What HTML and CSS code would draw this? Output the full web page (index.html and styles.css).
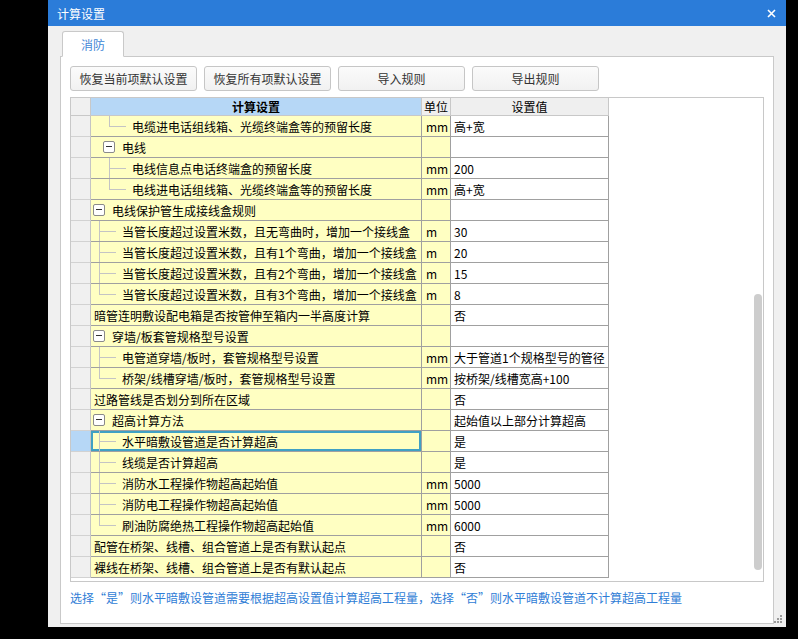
FILE: index.html
```html
<!DOCTYPE html>
<html lang="zh-CN">
<head>
<meta charset="utf-8">
<title>计算设置</title>
<link rel="stylesheet" href="styles.css">
</head>
<body>
<div class="dialog">
  <div class="titlebar">
    <span class="title">计算设置</span>
    <svg class="close" viewBox="0 0 9 9" width="9" height="9"><path d="M1 1L8 8M8 1L1 8" stroke="#fff" stroke-width="1.6" fill="none"/></svg>
  </div>
  <div class="dbody">
    <div class="tabs"><div class="tab">消防</div></div>
    <div class="panel">
      <div class="toolbar">
        <button class="btn">恢复当前项默认设置</button>
        <button class="btn">恢复所有项默认设置</button>
        <button class="btn">导入规则</button>
        <button class="btn">导出规则</button>
      </div>
      <div class="gridbox">
        <div class="table">
          <div class="row head">
            <div class="rh"></div>
            <div class="nm hsel">计算设置</div>
            <div class="un">单位</div>
            <div class="va">设置值</div>
          </div>
          <div class="row">
            <div class="rh"></div>
            <div class="nm"><span class="elb l2 last"></span><span>电缆进电话组线箱、光缆终端盒等的预留长度</span></div>
            <div class="un">mm</div>
            <div class="va">高+宽</div>
          </div>
          <div class="row">
            <div class="rh"></div>
            <div class="nm"><span class="ind"></span><span class="box"></span><span>电线</span></div>
            <div class="un"></div>
            <div class="va"></div>
          </div>
          <div class="row">
            <div class="rh"></div>
            <div class="nm"><span class="elb l2"></span><span>电线信息点电话终端盒的预留长度</span></div>
            <div class="un">mm</div>
            <div class="va">200</div>
          </div>
          <div class="row">
            <div class="rh"></div>
            <div class="nm"><span class="elb l2 last"></span><span>电线进电话组线箱、光缆终端盒等的预留长度</span></div>
            <div class="un">mm</div>
            <div class="va">高+宽</div>
          </div>
          <div class="row">
            <div class="rh"></div>
            <div class="nm"><span class="box"></span><span>电线保护管生成接线盒规则</span></div>
            <div class="un"></div>
            <div class="va"></div>
          </div>
          <div class="row">
            <div class="rh"></div>
            <div class="nm"><span class="elb"></span><span>当管长度超过设置米数，且无弯曲时，增加一个接线盒</span></div>
            <div class="un">m</div>
            <div class="va">30</div>
          </div>
          <div class="row">
            <div class="rh"></div>
            <div class="nm"><span class="elb"></span><span>当管长度超过设置米数，且有1个弯曲，增加一个接线盒</span></div>
            <div class="un">m</div>
            <div class="va">20</div>
          </div>
          <div class="row">
            <div class="rh"></div>
            <div class="nm"><span class="elb"></span><span>当管长度超过设置米数，且有2个弯曲，增加一个接线盒</span></div>
            <div class="un">m</div>
            <div class="va">15</div>
          </div>
          <div class="row">
            <div class="rh"></div>
            <div class="nm"><span class="elb last"></span><span>当管长度超过设置米数，且有3个弯曲，增加一个接线盒</span></div>
            <div class="un">m</div>
            <div class="va">8</div>
          </div>
          <div class="row">
            <div class="rh"></div>
            <div class="nm"><span class="t0">暗管连明敷设配电箱是否按管伸至箱内一半高度计算</span></div>
            <div class="un"></div>
            <div class="va">否</div>
          </div>
          <div class="row">
            <div class="rh"></div>
            <div class="nm"><span class="box"></span><span>穿墙/板套管规格型号设置</span></div>
            <div class="un"></div>
            <div class="va"></div>
          </div>
          <div class="row">
            <div class="rh"></div>
            <div class="nm"><span class="elb"></span><span>电管道穿墙/板时，套管规格型号设置</span></div>
            <div class="un">mm</div>
            <div class="va">大于管道1个规格型号的管径</div>
          </div>
          <div class="row">
            <div class="rh"></div>
            <div class="nm"><span class="elb last"></span><span>桥架/线槽穿墙/板时，套管规格型号设置</span></div>
            <div class="un">mm</div>
            <div class="va">按桥架/线槽宽高+100</div>
          </div>
          <div class="row">
            <div class="rh"></div>
            <div class="nm"><span class="t0">过路管线是否划分到所在区域</span></div>
            <div class="un"></div>
            <div class="va">否</div>
          </div>
          <div class="row">
            <div class="rh"></div>
            <div class="nm"><span class="box"></span><span>超高计算方法</span></div>
            <div class="un"></div>
            <div class="va">起始值以上部分计算超高</div>
          </div>
          <div class="row sel">
            <div class="rh"></div>
            <div class="nm"><span class="elb"></span><span>水平暗敷设管道是否计算超高</span></div>
            <div class="un"></div>
            <div class="va">是</div>
          </div>
          <div class="row">
            <div class="rh"></div>
            <div class="nm"><span class="elb"></span><span>线缆是否计算超高</span></div>
            <div class="un"></div>
            <div class="va">是</div>
          </div>
          <div class="row">
            <div class="rh"></div>
            <div class="nm"><span class="elb"></span><span>消防水工程操作物超高起始值</span></div>
            <div class="un">mm</div>
            <div class="va">5000</div>
          </div>
          <div class="row">
            <div class="rh"></div>
            <div class="nm"><span class="elb"></span><span>消防电工程操作物超高起始值</span></div>
            <div class="un">mm</div>
            <div class="va">5000</div>
          </div>
          <div class="row">
            <div class="rh"></div>
            <div class="nm"><span class="elb last"></span><span>刷油防腐绝热工程操作物超高起始值</span></div>
            <div class="un">mm</div>
            <div class="va">6000</div>
          </div>
          <div class="row">
            <div class="rh"></div>
            <div class="nm"><span class="t0">配管在桥架、线槽、组合管道上是否有默认起点</span></div>
            <div class="un"></div>
            <div class="va">否</div>
          </div>
          <div class="row">
            <div class="rh"></div>
            <div class="nm"><span class="t0">裸线在桥架、线槽、组合管道上是否有默认起点</span></div>
            <div class="un"></div>
            <div class="va">否</div>
          </div>
        </div>
        <div class="track"><div class="thumb"></div></div>
      </div>
      <div class="note">选择“是”则水平暗敷设管道需要根据超高设置值计算超高工程量，选择“否”则水平暗敷设管道不计算超高工程量</div>
    </div>
  </div>
  <svg class="grip" viewBox="0 0 8 8" width="8" height="8">
    <rect x="6" y="0" width="2" height="2" fill="#9a9a9a"/>
    <rect x="3" y="3" width="2" height="2" fill="#9a9a9a"/>
    <rect x="6" y="3" width="2" height="2" fill="#9a9a9a"/>
    <rect x="0" y="6" width="2" height="2" fill="#9a9a9a"/>
    <rect x="3" y="6" width="2" height="2" fill="#9a9a9a"/>
    <rect x="6" y="6" width="2" height="2" fill="#9a9a9a"/>
  </svg>
</div>
</body>
</html>
```

FILE: styles.css
```css
html, body {
  margin: 0;
  padding: 0;
  background: #000;
}
body {
  font-family: "Noto Sans CJK SC", sans-serif;
  font-size: 12px;
  color: #000;
}
.dialog {
  position: relative;
  margin-left: 48px;
  width: 738px;
  height: 627px;
  background: #f0f0f0;
  display: flex;
  flex-direction: column;
}
.titlebar {
  flex: none;
  height: 26px;
  background: #2b7cd9;
  color: #fff;
  display: flex;
  align-items: center;
  justify-content: space-between;
  padding: 0 10px 0 9px;
}
.title {
  font-size: 12px;
}
.close {
  display: block;
}
.dbody {
  flex: 1;
  padding: 5px 12px 0;
  display: flex;
  flex-direction: column;
}
.tabs {
  display: flex;
  padding-left: 2px;
}
.tab {
  position: relative;
  width: 60px;
  height: 24px;
  border: 1px solid #c9c9c9;
  border-bottom: 1px solid #fff;
  border-radius: 3px 3px 0 0;
  background: #fff;
  margin-bottom: -1px;
  color: #3f86d6;
  display: flex;
  align-items: center;
  justify-content: center;
}
.panel {
  height: 557px;
  border: 1px solid #c9c9c9;
  background: #fff;
  padding: 9px 9px 0;
  display: flex;
  flex-direction: column;
}
.toolbar {
  display: flex;
  gap: 7px;
}
.btn {
  width: 127px;
  height: 25px;
  border: 1px solid #c6c6c6;
  border-radius: 3px;
  background: linear-gradient(#fbfbfb, #f1f1f1);
  font-family: "Noto Sans CJK SC", sans-serif;
  font-size: 12px;
  color: #333;
  padding: 0;
}
.gridbox {
  margin-top: 6px;
  height: 485px;
  box-sizing: border-box;
  border: 1px solid #c8c8c8;
  background: #fff;
  display: flex;
}
.table {
  width: 538px;
  flex: none;
}
.row {
  display: grid;
  grid-template-columns: 20px 331px 29px 158px;
  height: 21px;
}
.row > div {
  box-sizing: border-box;
  border-right: 1px solid #a0a0a0;
  border-bottom: 1px solid #a0a0a0;
  white-space: nowrap;
  overflow: hidden;
  display: flex;
  align-items: center;
}
.row > .rh {
  background: #f0f0f0;
  border-right-color: #c4c4c4;
  border-bottom-color: #d2d2d2;
}
.row > .nm {
  background: #ffffc2;
  padding-left: 2px;
}
.row > .un {
  background: #ffffc2;
  padding-left: 4px;
}
.row > .va {
  background: #fff;
  padding-left: 3px;
}
.row.head {
  height: 18px;
}
.row.head > div {
  justify-content: center;
  padding-left: 0;
  background: #efefef;
  border-right-color: #c8c8c8;
  border-bottom-color: #c8c8c8;
}
.row.head > .hsel {
  background: #b6d7f6;
  font-weight: bold;
}
.row.head > .rh {
  background: #f0f0f0;
}
.row.sel > .rh {
  background: #b6d7f6;
}
.row.sel > .nm {
  box-shadow: inset 0 0 0 2px #40a0c4;
}
.t0 {
  margin-left: 1px;
}
.ind {
  flex: none;
  width: 10px;
}
.box {
  flex: none;
  position: relative;
  width: 12px;
  height: 12px;
  box-sizing: border-box;
  border: 1px solid #8a8a8a;
  border-radius: 2px;
  background: #fff;
  margin-right: 7px;
}
.box::after {
  content: "";
  position: absolute;
  left: 2px;
  top: 4px;
  width: 6px;
  height: 1px;
  background: #333;
}
.elb {
  flex: none;
  align-self: stretch;
  width: 17px;
  margin: 0 6px;
  background:
    linear-gradient(#c4c4c4, #c4c4c4) left top / 1px 100% no-repeat,
    linear-gradient(#c4c4c4, #c4c4c4) left center / 100% 1px no-repeat;
}
.elb.last {
  background:
    linear-gradient(#c4c4c4, #c4c4c4) left top / 1px 50% no-repeat,
    linear-gradient(#c4c4c4, #c4c4c4) left center / 100% 1px no-repeat;
}
.elb.l2 {
  margin-left: 16px;
}
.track {
  margin-left: auto;
  margin-right: 1px;
  width: 8px;
  padding-top: 196px;
}
.thumb {
  height: 276px;
  border-radius: 4px;
  background: #cdcdcd;
}
.note {
  flex: none;
  height: 31px;
  display: flex;
  align-items: center;
  color: #2f7dd6;
  white-space: nowrap;
}
.grip {
  position: absolute;
  right: 4px;
  bottom: 4px;
}
```
